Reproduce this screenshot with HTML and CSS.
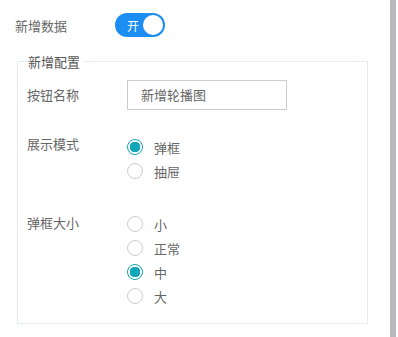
FILE: index.html
```html
<!DOCTYPE html>
<html lang="zh-CN">
<head>
  <meta charset="UTF-8">
  <title>新增数据</title>
  <link rel="stylesheet" href="styles.css">
</head>
<body>
  <div class="page">
    <div class="content">
      <div class="row-top">
        <span class="top-label">新增数据</span>
        <span class="switch"><span class="switch-text">开</span><span class="knob"></span></span>
      </div>
      <fieldset class="box">
        <legend>新增配置</legend>
        <div class="field field-name">
          <span class="label">按钮名称</span>
          <div class="input">新增轮播图</div>
        </div>
        <div class="field field-mode">
          <span class="label">展示模式</span>
          <div class="radios">
            <div class="radio checked"><span class="dot"></span>弹框</div>
            <div class="radio"><span class="dot"></span>抽屉</div>
          </div>
        </div>
        <div class="field field-size">
          <span class="label">弹框大小</span>
          <div class="radios">
            <div class="radio"><span class="dot"></span>小</div>
            <div class="radio"><span class="dot"></span>正常</div>
            <div class="radio checked"><span class="dot"></span>中</div>
            <div class="radio"><span class="dot"></span>大</div>
          </div>
        </div>
      </fieldset>
    </div>
    <div class="scrollbar"></div>
  </div>
</body>
</html>
```

FILE: styles.css
```css
body {
  margin: 0;
  background: #fff;
  font-family: "Noto Sans CJK SC", "Noto Sans", sans-serif;
  font-size: 13px;
  color: #666;
}
.page {
  display: flex;
  height: 337px;
}
.content {
  width: 390px;
  padding: 13px 0 0 15px;
  box-sizing: border-box;
}
.scrollbar {
  width: 6px;
  height: 337px;
  background: #b9b8bf;
}
.row-top {
  display: flex;
  align-items: center;
  height: 24px;
}
.top-label {
  width: 100px;
}
.switch {
  width: 50px;
  height: 24px;
  border-radius: 12px;
  background: #1c8df1;
  display: flex;
  align-items: center;
  justify-content: space-between;
  padding: 0 2px 0 12px;
  box-sizing: border-box;
}
.switch-text {
  color: #fff;
  font-size: 12px;
}
.knob {
  width: 20px;
  height: 20px;
  border-radius: 50%;
  background: #fff;
}
.box {
  margin: 15px 0 0 2px;
  width: 351px;
  height: 272px;
  box-sizing: border-box;
  border: 1px solid #e6ebf3;
  padding: 9px 0 0 9px;
}
legend {
  padding: 0 3px 0 1px;
  color: #555;
}
.field {
  display: flex;
}
.label {
  width: 100px;
  line-height: 18px;
}
.field-name {
  align-items: center;
}
.input {
  width: 160px;
  height: 30px;
  box-sizing: border-box;
  border: 1px solid #ccc;
  padding-left: 13px;
  line-height: 28px;
}
.field-mode {
  margin-top: 25px;
}
.field-mode .radios {
  margin-top: 3px;
}
.field-size {
  margin-top: 34px;
}
.field-size .radios {
  margin-top: 1px;
}
.radios {
  display: flex;
  flex-direction: column;
  gap: 6px;
}
.radio {
  display: flex;
  align-items: center;
  height: 18px;
}
.dot {
  width: 16px;
  height: 16px;
  box-sizing: border-box;
  border: 1px solid #ccc;
  border-radius: 50%;
  margin-right: 11px;
  background: #fff;
}
.radio.checked .dot {
  border-color: #11a6b8;
  background: radial-gradient(circle, #11a6b8 0 5px, #fff 5.5px);
}
```
